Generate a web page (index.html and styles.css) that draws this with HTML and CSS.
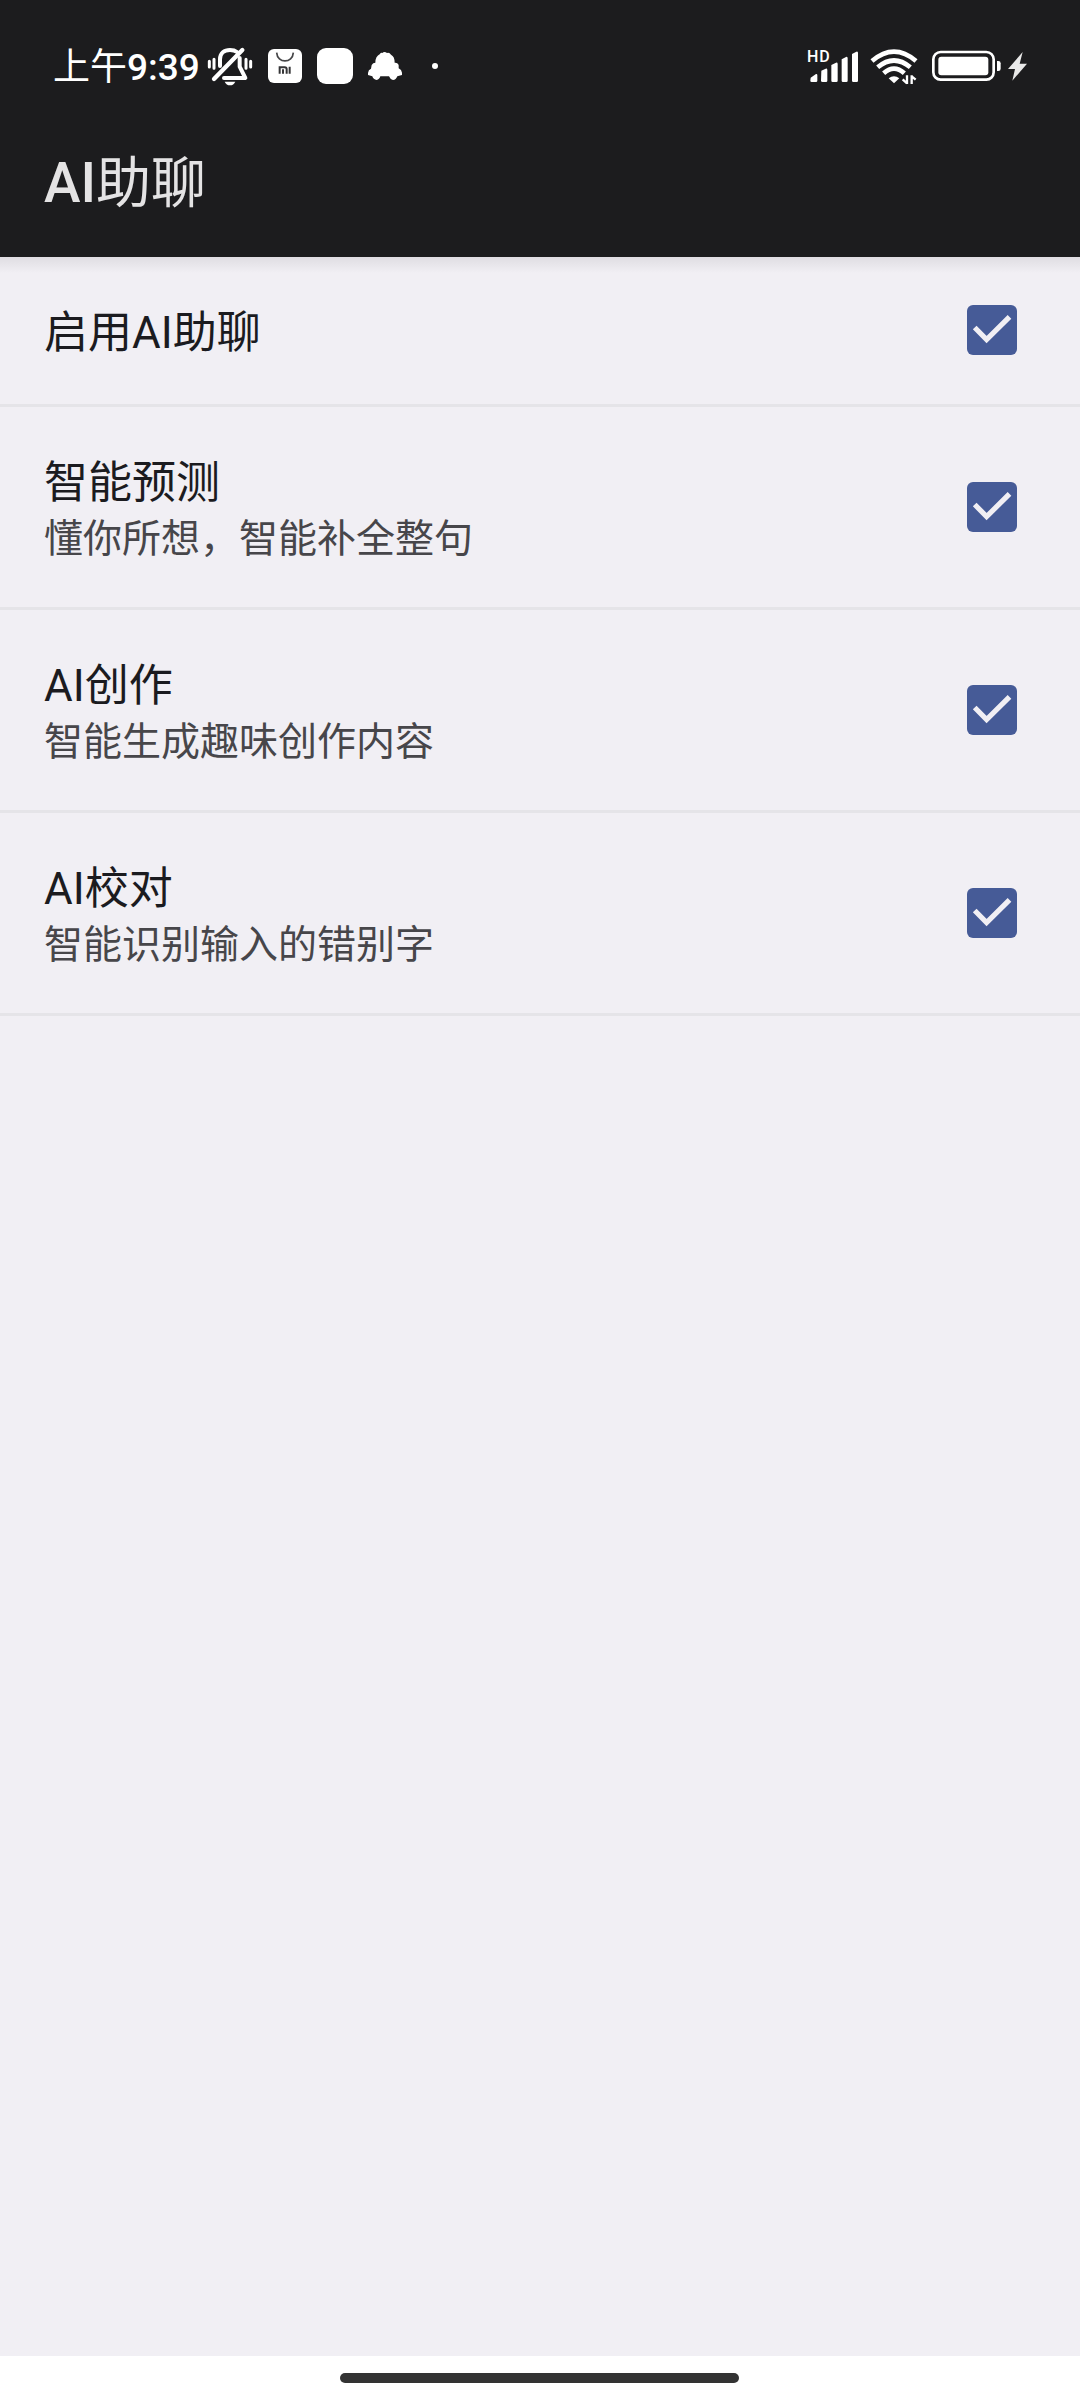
FILE: index.html
```html
<!DOCTYPE html>
<html lang="zh-CN">
<head>
<meta charset="utf-8">
<title>AI助聊</title>
<link rel="stylesheet" href="styles.css">
</head>
<body>
<div class="screen">
  <header class="header">
    <div class="status">
      <div class="status-left">
        <span class="time"><span class="han">上午</span>9:39</span>
        <svg class="i-bell" width="46" height="42" viewBox="21 45 138 126" fill="none" stroke="#fff" stroke-width="12" stroke-linecap="round" stroke-linejoin="round">
          <path d="M60 108V88C60 69 73 60 90 60Q103 60 111 66M119 84V110L136 144H72"/>
          <path d="M42 147L127 60" stroke-width="13"/>
          <path d="M28 94v17M42 88v27M138 88v27M152 94v17" stroke-width="9"/>
          <path d="M74 155h32q-5 11-16 11t-16-11z" fill="#fff" stroke="none"/>
        </svg>
        <svg class="i-shop" width="36" height="36" viewBox="0 0 108 108">
          <rect x="3" y="3" width="102" height="102" rx="18" fill="#fff"/>
          <path d="M29 14C31 47 77 47 79 14" fill="none" stroke="#454547" stroke-width="5"/>
          <path d="M38 77V58h15q6 0 6 6v13M48 64v13M68 56v21" fill="none" stroke="#353537" stroke-width="6"/>
        </svg>
        <span class="app-square"></span>
        <svg class="i-car" width="36" height="30" viewBox="501 63 108 90" fill="#fff">
          <path d="M540 72Q542 67 547 69Q553 63 561 69Q568 66 573 74Q584 79 584 98Q594 97 596 106V115Q605 119 606 128V135L592 139Q588 150 579 150Q571 149 567 139H541Q538 149 530 150Q520 149 517 139L504 135V129Q505 119 513 116L515 105Q519 98 526 98Q526 79 540 72Z"/>
        </svg>
        <span class="dot"></span>
      </div>
      <div class="status-right">
        <div class="signal">
          <span class="hd">HD</span>
          <svg width="52" height="34" viewBox="51 57 156 102" fill="#fff">
            <path d="M62 143L78 132Q82 131 82 136V152Q82 156 78 156H65Q61 156 61 152ZM94 122L107 116Q112 115 112 120V152Q112 156 108 156H98Q93 156 93 152ZM124 105L138 98Q143 97 143 102V152Q143 156 139 156H128Q124 156 124 152ZM155 88L168 81Q173 79 173 85V152Q173 156 169 156H159Q155 156 155 152ZM186 72L199 65Q204 63 204 69V152Q204 156 200 156H190Q186 156 186 152Z"/>
          </svg>
        </div>
        <svg class="i-wifi" width="48" height="37" viewBox="240 54 144 111" fill="none" stroke="#fff" stroke-width="14">
          <path d="M246 93Q312 37 378 93M263 112Q312 71 361 112M281 130Q312 102 343 130"/>
          <path d="M296 145Q312 132 328 145L312 160Z" fill="#fff" stroke="none"/>
          <path d="M351 136V162M338 148L351 160M365 162V136M377 149L365 139" stroke-width="7"/>
        </svg>
        <svg class="i-battery" width="71" height="32" viewBox="423 60 213 96" fill="#fff">
          <rect x="430" y="66" width="181" height="83" rx="22" fill="none" stroke="#fff" stroke-width="8"/>
          <rect x="445" y="80" width="150" height="56" rx="9"/>
          <path d="M621 93h4q7 0 7 7v16q0 7-7 7h-4z"/>
        </svg>
        <svg class="i-bolt" width="21" height="31" viewBox="651 63 63 93" fill="#e8e8e8">
          <path d="M698 66L654 117H675L667 152L711 101H689Z"/>
        </svg>
      </div>
    </div>
    <h1 class="title">AI<span class="han">助聊</span></h1>
  </header>
  <main class="list">
    <label class="row row-single">
      <span class="texts"><span class="name">启用AI助聊</span></span>
      <svg class="check" viewBox="0 0 50 50"><rect width="50" height="50" rx="6"/><path d="M7.7 22.5L19.6 34.6L42.5 11.9"/></svg>
    </label>
    <label class="row">
      <span class="texts"><span class="name">智能预测</span><span class="summary">懂你所想，智能补全整句</span></span>
      <svg class="check" viewBox="0 0 50 50"><rect width="50" height="50" rx="6"/><path d="M7.7 22.5L19.6 34.6L42.5 11.9"/></svg>
    </label>
    <label class="row">
      <span class="texts"><span class="name">AI创作</span><span class="summary">智能生成趣味创作内容</span></span>
      <svg class="check" viewBox="0 0 50 50"><rect width="50" height="50" rx="6"/><path d="M7.7 22.5L19.6 34.6L42.5 11.9"/></svg>
    </label>
    <label class="row">
      <span class="texts"><span class="name">AI校对</span><span class="summary">智能识别输入的错别字</span></span>
      <svg class="check" viewBox="0 0 50 50"><rect width="50" height="50" rx="6"/><path d="M7.7 22.5L19.6 34.6L42.5 11.9"/></svg>
    </label>
  </main>
  <footer class="nav"><span class="pill"></span></footer>
</div>
</body>
</html>
```
FILE: styles.css
```css
* {
  box-sizing: border-box;
}

body {
  margin: 0;
  font-family: Roboto, "Noto Sans CJK SC", sans-serif;
}

.screen {
  display: flex;
  flex-direction: column;
  width: 1080px;
  height: 2400px;
  background: #f1eff4;
}

.header {
  height: 257px;
  background: #1c1c1e;
}

.status {
  display: flex;
  justify-content: space-between;
  height: 132px;
  padding: 0 52px 0 53px;
  color: #fff;
}

.status-left,
.status-right {
  display: flex;
  align-items: center;
}

.status svg {
  display: block;
  flex: none;
}

.time {
  width: 154px;
  padding-top: 4px;
  font-size: 37px;
  line-height: 54px;
  font-weight: 500;
  white-space: nowrap;
}

.han {
  font-weight: 400;
}

.i-shop {
  margin-left: 14px;
}

.app-square {
  width: 36px;
  height: 36px;
  margin-left: 14px;
  border-radius: 9px;
  background: #fff;
}

.i-car {
  margin-left: 14px;
}

.dot {
  width: 6px;
  height: 6px;
  margin-left: 29px;
  border-radius: 50%;
  background: #fff;
}

.signal {
  position: relative;
  width: 52px;
}

.hd {
  position: absolute;
  left: 0;
  top: -2px;
  font-size: 16px;
  line-height: 20px;
  font-weight: 500;
  letter-spacing: 0.8px;
}

.i-wifi {
  margin-left: 11px;
}

.i-battery {
  margin-left: 13px;
}

.i-bolt {
  margin-left: 5px;
}

.title {
  margin: 0;
  padding: 1px 0 0 44px;
  font-size: 55px;
  line-height: 100px;
  font-weight: 500;
  color: #e4e3e4;
}

.list {
  flex: 1;
  background: linear-gradient(#dfdde2, #f1eff4 16px);
}

.row {
  display: flex;
  align-items: center;
  justify-content: space-between;
  height: 203px;
  padding: 0 63px 0 44px;
  border-bottom: 3px solid #e5e4e8;
}

.row-single {
  height: 150px;
  padding-bottom: 1px;
}

.texts {
  display: flex;
  flex-direction: column;
  padding-top: 5px;
}

.name {
  font-size: 44px;
  line-height: 60px;
  color: #1b1b1f;
}

.row-single .name {
  padding-top: 1px;
}

.summary {
  font-size: 39px;
  line-height: 53px;
  color: #47464a;
}

.check {
  width: 50px;
  height: 50px;
}

.check rect {
  fill: #465b97;
}

.check path {
  fill: none;
  stroke: #f1eff4;
  stroke-width: 5.2;
}

.nav {
  height: 44px;
  padding: 17px 0 0 340px;
  background: #fff;
}

.pill {
  display: block;
  width: 399px;
  height: 10px;
  border-radius: 5px;
  background: #333;
}
```
